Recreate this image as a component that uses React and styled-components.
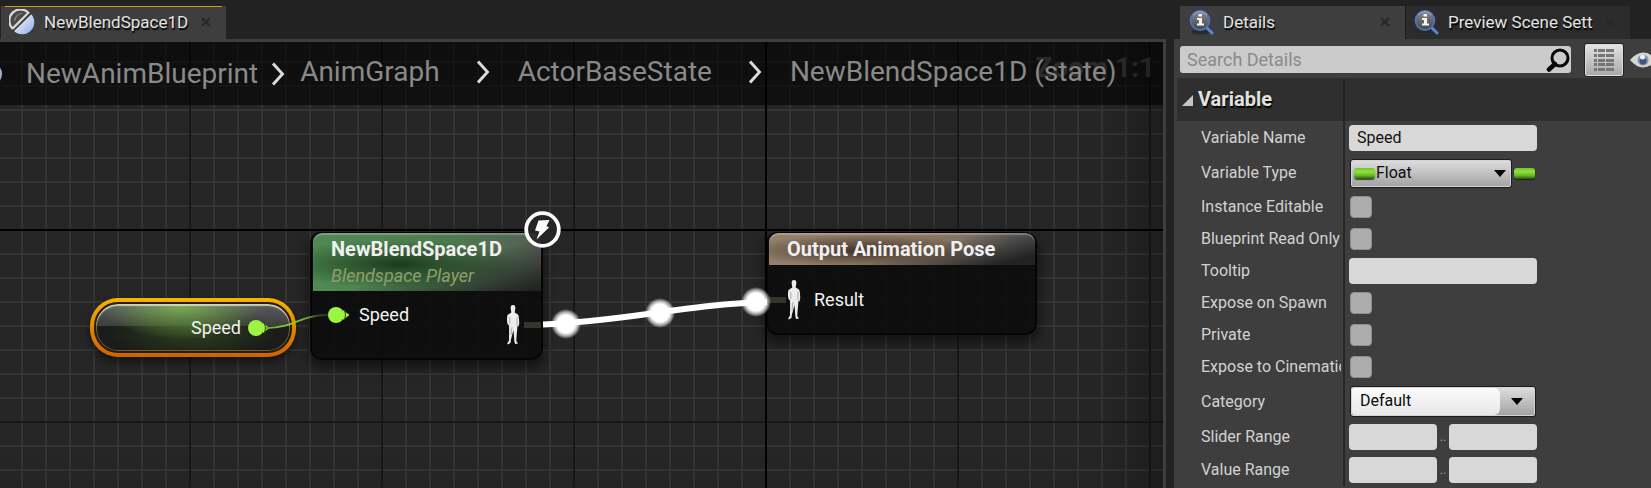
import React from "react";
import styled, { createGlobalStyle, css } from "styled-components";

const GlobalStyle = createGlobalStyle`
  *, *::before, *::after { box-sizing: border-box; }
  body { margin: 0; background: #222; color: #ddd; font-family: Roboto, sans-serif; }
  button, input, select { font: inherit; }
`;

/* ---------- frame ---------- */

const Editor = styled.main`
  display: grid;
  grid-template-columns: minmax(0, 1166fr) minmax(0, 477fr);
  column-gap: 8px;
  min-height: 100vh;
  padding-top: 6px;
  background: #222;
  overflow: hidden;
`;

const Dock = styled.section`
  display: flex;
  flex-direction: column;
  min-width: 0;
`;

const TabBar = styled.div`
  display: flex;
  height: 33px;
  padding-left: ${(p) => p.$inset}px;
`;

const Tab = styled.div`
  position: relative;
  display: flex;
  align-items: center;
  gap: 9px;
  width: 225px;
  padding: 0 15px 2px 8px;
  background: ${(p) => (p.$active ? "#3e3e3e" : "#2c2c2c")};
  box-shadow: ${(p) => (p.$active ? "none" : "inset 1px 0 0 #1a1a1a")};
  ${(p) =>
    p.$major &&
    css`
      &::before {
        content: "";
        position: absolute;
        inset: 0 4px auto;
        height: 1px;
        background: #c8a900;
      }
    `}
`;

const TabLabel = styled.button`
  flex: 1;
  min-width: 0;
  padding: 0;
  border: 0;
  background: none;
  color: #e2e2e2;
  font-size: 17px;
  line-height: 24px;
  text-align: left;
  white-space: nowrap;
  overflow: hidden;
  text-shadow: 1px 2px 1px #000;
`;

const TabClose = styled.button`
  display: flex;
  padding: 0;
  border: 0;
  background: none;
  color: #282828;
`;

/* ---------- graph ---------- */

const Graph = styled.div`
  position: relative;
  flex: 1;
  min-height: 446px;
  overflow: hidden;
  border: solid #3e3e3e;
  border-width: 3px 3px 0 0;
  background-color: #262626;
  background-image:
    linear-gradient(#000, #000),
    linear-gradient(#000, #000),
    linear-gradient(90deg, #181818 2px, transparent 2px),
    linear-gradient(#181818 2px, transparent 2px),
    linear-gradient(90deg, #343434 2px, transparent 2px),
    linear-gradient(#343434 2px, transparent 2px);
  background-size: 2px 100%, 100% 2px, 192px 192px, 192px 192px, 24px 24px, 24px 24px;
  background-position: 765px 0, 0 187px, 189px 0, 0 187px, 21px 0, 0 19px;
  background-repeat: no-repeat, no-repeat, repeat, repeat, repeat, repeat;
`;

const Vignette = styled.div`
  position: absolute;
  inset: 0;
  pointer-events: none;
  box-shadow: inset -50px 0 60px -30px rgba(0, 0, 0, 0.3);
`;

const ZoomLevel = styled.output`
  position: absolute;
  top: 8px;
  right: 8px;
  color: #6c6c6c;
  font-size: 28px;
  font-weight: 700;
  line-height: 36px;
`;

const Breadcrumbs = styled.nav`
  position: relative;
  display: flex;
  height: 63px;
  align-items: center;
  background: rgba(0, 0, 0, 0.6);
  color: #8a8a8a;
  font-size: 28px;
  line-height: 32px;
  white-space: nowrap;
`;

const RootCrumb = styled.div`
  display: flex;
  align-items: center;
  gap: 13px;
  margin-right: 15px;
`;

const CrumbTrail = styled.div`
  display: flex;
  align-items: center;
  gap: 28px;
  padding-bottom: 3px;
`;

const CrumbStep = styled.div`
  display: flex;
  align-items: center;
  gap: 36px;
`;

const Crumb = styled.a`
  color: inherit;
  text-decoration: none;
`;

const CrumbOrb = styled.span`
  width: 26px;
  height: 24px;
  margin-left: -24px;
  margin-right: 11px;
  border-radius: 50%;
  background: #9fb0d8;
`;

const Wires = styled.svg`
  position: absolute;
  left: 0;
  top: 0;
  pointer-events: none;
`;

const Node = styled.article`
  position: absolute;
  left: ${(p) => p.$x}px;
  top: ${(p) => p.$y}px;
  width: ${(p) => p.$w}px;
  padding: 1px 2px 3px 3px;
  border-radius: 12px;
  background: rgba(10, 10, 10, 0.86);
  box-shadow: inset 0 0 0 2px rgba(0, 0, 0, 0.6), 0 6px 12px 2px rgba(0, 0, 0, 0.5);
`;

const NodeHeader = styled.header`
  padding: 2px 18px;
  border-radius: 9px 9px 0 0;
  box-shadow: inset 0 2px 1px rgba(255, 255, 255, 0.25);
  ${(p) =>
    p.$tone === "green"
      ? css`
          background:
            radial-gradient(ellipse 55% 42% at 38% 54%, rgba(20, 48, 20, 0.85), transparent),
            linear-gradient(165deg, transparent 55%, rgba(30, 30, 30, 0.95) 98%),
            linear-gradient(90deg, #4f8a53 0%, #4d7a50 60%, #555f55 100%);
        `
      : css`
          background:
            radial-gradient(ellipse 45% 50% at 35% 55%, rgba(45, 35, 28, 0.8), transparent),
            linear-gradient(165deg, transparent 55%, rgba(30, 32, 32, 0.95) 90%),
            linear-gradient(90deg, #94806c 0%, #8a7663 60%, #666 100%);
        `}
`;

const NodeTitle = styled.h2`
  margin: 0;
  color: #f0f0f0;
  font-size: 20px;
  font-weight: 700;
  line-height: 28px;
  white-space: nowrap;
`;

const NodeSubtitle = styled.p`
  margin: 0;
  color: #8f9f6a;
  font-size: 18px;
  font-style: italic;
  line-height: 26px;
`;

const NodeBody = styled.div`
  display: flex;
  align-items: ${(p) => (p.$centered ? "center" : "flex-start")};
  justify-content: space-between;
  padding: ${(p) => p.$pad};
`;

const Pin = styled.div`
  display: flex;
  align-items: center;
  gap: ${(p) => p.$gap || 9}px;
  color: #f2f2f2;
  font-size: 18px;
  line-height: 20px;
`;

const PosePin = styled.div`
  display: flex;
  align-items: center;
  gap: ${(p) => (p.$output ? 4 : 1)}px;
`;

const PoseStub = styled.span`
  width: 17px;
  height: 6px;
  background: #35352f;
`;

const VariableNode = styled.article`
  position: absolute;
  left: 90px;
  top: 256px;
  width: 206px;
  height: 59px;
  padding: 4px;
  border-radius: 28px;
  background: linear-gradient(#f6b500, #e08a00 50%, #cf6200);
  box-shadow: 0 5px 10px rgba(0, 0, 0, 0.5);
`;

const VariableBody = styled.div`
  display: flex;
  align-items: center;
  justify-content: flex-end;
  gap: 7px;
  height: 100%;
  padding: 0 20px 0 0;
  border-radius: 24px;
  border: 2px solid #2b1c05;
  box-shadow: inset 0 2px 1px rgba(235, 235, 225, 0.75), inset 0 0 0 1px rgba(170, 130, 80, 0.6);
  background:
    radial-gradient(ellipse 42% 75% at 44% 0%, rgba(130, 190, 85, 0.85), transparent),
    radial-gradient(ellipse 45% 60% at 50% 60%, rgba(50, 72, 28, 0.8), transparent),
    linear-gradient(#5c5c60 0%, #3c3e3c 46%, #1b1b1b 47%, #191b19 100%);
  color: #f2f2f2;
  font-size: 18px;
  line-height: 22px;
`;

const Badge = styled.span`
  position: absolute;
  right: -18px;
  top: -21px;
  display: flex;
`;

/* ---------- details ---------- */

const DetailsPanel = styled.div`
  flex: 1;
  min-width: 0;
  background: #3e3e3e;
  overflow: hidden;
`;

const Toolbar = styled.div`
  display: flex;
  align-items: center;
  height: 39px;
  padding: 4px 0 2px 6px;
`;

const SearchBox = styled.label`
  display: flex;
  flex: 1;
  align-items: center;
  height: 27px;
  margin-right: 13px;
  padding-right: 1px;
  border-radius: 3px;
  background: #cbcbcb;
`;

const SearchInput = styled.input`
  flex: 1;
  min-width: 0;
  padding: 0 7px;
  border: 0;
  outline: 0;
  background: none;
  color: #222;
  font-size: 18px;
  &::placeholder { color: #8a8a8a; opacity: 1; }
`;

const ViewButton = styled.button`
  display: flex;
  align-items: center;
  justify-content: center;
  width: 40px;
  height: 34px;
  padding: 0;
  border: 1px solid #222;
  border-radius: 3px;
  background: linear-gradient(#e4e4e4, #a8a8a8);
  box-shadow: inset 0 0 0 1px #ddd;
`;

const EyeButton = styled.button`
  display: flex;
  width: 21px;
  margin-left: 6px;
  padding: 0;
  border: 0;
  background: none;
  overflow: hidden;
`;

const Properties = styled.form`
  display: flex;
  flex-direction: column;
  margin-left: 3px;
`;

const Row = styled.div`
  display: grid;
  grid-template-columns: 168px minmax(0, 1fr);
  height: ${(p) => p.$h}px;
  background: ${(p) => (p.$category ? "#2f2f2f" : "transparent")};
`;

const LabelCell = styled.div`
  display: flex;
  align-items: center;
  padding: 0 2px 0 24px;
  border-right: 2px solid #262626;
`;

const Label = styled.label`
  color: #d2d2d2;
  font-size: 16px;
  line-height: 22px;
  white-space: nowrap;
  overflow: hidden;
`;

const CategoryToggle = styled.button`
  display: flex;
  align-items: center;
  gap: 5px;
  padding: 0 0 2px 4px;
  border: 0;
  border-right: 2px solid #262626;
  background: none;
  color: #e2e2e2;
  font-size: 20px;
  font-weight: 700;
  line-height: 26px;
  text-shadow: 1px 2px 1px #000;
`;

const ValueCell = styled.div`
  display: flex;
  align-items: center;
  gap: 2px;
  padding-left: ${(p) => (p.$framed ? 5 : 4)}px;
`;

const TextField = styled.input`
  width: ${(p) => (p.$half ? 88 : 188)}px;
  height: 26px;
  padding: 0 8px 2px;
  border: 0;
  border-radius: 4px;
  outline: 0;
  background: #d8d8d8;
  color: #111;
  font-size: 16px;
`;

const RangeDots = styled.span`
  width: 8px;
  color: #a0a0a0;
  font-size: 12px;
  line-height: 16px;
  text-align: center;
`;

const CheckBox = styled.input.attrs({ type: "checkbox" })`
  appearance: none;
  width: 22px;
  height: 22px;
  margin: 0;
  border: 1px solid #8e8e8e;
  border-radius: 4px;
  background: #adadad;
  &:checked { background: #e0a030; }
`;

const ComboFrame = styled.div`
  position: relative;
  display: grid;
  align-items: center;
  width: ${(p) => p.$w}px;
  height: ${(p) => p.$h}px;
  padding: 1px;
  border: 1px solid #1c1c1c;
  border-radius: 3px;
  background: linear-gradient(#dedede, #a2a2a2);
  box-shadow: inset 0 0 0 1px #d4d4d4;
  > * { grid-area: 1 / 1; }
`;

const ComboFace = styled.span`
  height: 100%;
  margin-right: 34px;
  border-radius: 3px 6px 6px 3px;
  background: linear-gradient(#fbfbfb, #e8e8e8);
`;

const Combo = styled.select`
  appearance: none;
  position: relative;
  width: 100%;
  height: 24px;
  padding: 0 0 2px ${(p) => p.$indent}px;
  border: 0;
  outline: 0;
  background: none;
  color: #0c0c0c;
  font-size: 16px;
`;

const ComboArrow = styled.span`
  justify-self: end;
  margin-right: ${(p) => p.$right}px;
  border: solid transparent;
  border-width: 7px 6px 0;
  border-top-color: #050505;
  pointer-events: none;
`;

const Pill = styled.span`
  display: block;
  justify-self: start;
  width: 21px;
  height: 11px;
  margin-left: ${(p) => (p.$inset ? 2 : 0)}px;
  border-radius: 3px;
  background: linear-gradient(#6fc821, #8fe23c 35%, #64b51c 70%, #2f4f18);
  box-shadow: 0 1px 1px rgba(20, 20, 20, 0.7);
`;

/* ---------- drawings ---------- */

const CloseIcon = () => (
  <svg width="10" height="10" viewBox="0 0 10 10" fill="none" stroke="currentColor" strokeWidth="2.4">
    <path d="M1 1L9 9M9 1L1 9" />
  </svg>
);

const BlendIcon = () => (
  <svg width="26" height="26" viewBox="0 0 26 26">
    <defs>
      <linearGradient id="orb" x1="0" y1="0" x2="1" y2="1">
        <stop offset="0.4" stopColor="#d5def6" />
        <stop offset="1" stopColor="#8fa6ea" />
      </linearGradient>
    </defs>
    <path d="M5 19.500L21.500 4.500A12 12 0 0 1 5 22Z" fill="url(#orb)" />
    <path d="M3.500 19.500A11 11 0 0 1 19.500 3.800Z" fill="#4a4a4a" stroke="#d8d8d8" strokeWidth="2.200" strokeLinejoin="round" />
    <path d="M3.500 22.500L22.500 4" stroke="#333" strokeWidth="1.600" />
    <path d="M5.500 12A8 8 0 0 1 13 4.500" fill="none" stroke="#8a8a8a" strokeWidth="1.200" />
  </svg>
);

const InfoIcon = () => (
  <svg width="26" height="26" viewBox="0 0 26 26">
    <defs>
      <linearGradient id="lens" x1="0" y1="0" x2="0" y2="1">
        <stop offset="0" stopColor="#8a8a8a" />
        <stop offset="1" stopColor="#454545" />
      </linearGradient>
    </defs>
    <ellipse cx="13" cy="23" rx="10" ry="2.500" fill="#2a2a2a" />
    <path d="M18 18L24 24" stroke="#5b83d6" strokeWidth="3" strokeLinecap="round" />
    <circle cx="12" cy="11.500" r="9.500" fill="url(#lens)" stroke="#4e72bd" strokeWidth="1.800" />
    <path d="M5 6A9 9 0 0 1 19 6" fill="none" stroke="#9db4e4" strokeWidth="1" />
    <path d="M10.500 5h3.500v2.500h-3.500zM9 9h5v5.500h2v2h-7v-2h2v-3.500h-2z" fill="#f4f4f4" />
  </svg>
);

const SearchIcon = () => (
  <svg width="24" height="24" viewBox="0 0 24 24" fill="none" stroke="#080808">
    <circle cx="14" cy="10" r="8" strokeWidth="3" />
    <path d="M9 16L3 21.500" strokeWidth="4.500" strokeLinecap="round" />
  </svg>
);

const ListIcon = () => (
  <svg width="22" height="22" viewBox="0 0 22 22" fill="#757575">
    {[0, 5, 10, 14, 19].map((y) => (
      <g key={y}>
        <rect x="1" y={y} width="3" height="3" />
        <rect x="5" y={y} width="7" height="3" />
        <rect x="13" y={y} width="8" height="3" />
      </g>
    ))}
  </svg>
);

const EyeShape = styled.svg`
  flex: none;
`;

const EyeIcon = () => (
  <EyeShape width="28" height="16" viewBox="0 0 28 16">
    <path d="M0 8Q13 -7 27 8Q13 23 0 8Z" fill="#d6d6d6" />
    <circle cx="13" cy="8" r="5.500" fill="#8494ae" />
    <circle cx="13" cy="9" r="3.500" fill="#3c5684" />
    <circle cx="12.500" cy="5" r="2.500" fill="#f2f2f2" />
  </EyeShape>
);

const Chevron = () => (
  <svg width="14" height="24" viewBox="0 0 14 24" fill="none" stroke="#dcdcdc" strokeWidth="2.900">
    <path d="M2 1.500L11.500 12L2 22.500" />
  </svg>
);

const ExpandedIcon = () => (
  <svg width="12" height="14" viewBox="0 0 12 14">
    <path d="M12 3V14H1Z" fill="#c4c4c4" />
  </svg>
);

const FloatPin = () => (
  <svg width="22" height="16" viewBox="0 0 22 16" fill="#9cf541">
    <circle cx="8" cy="8" r="8" />
    <path d="M15 3L21.500 8L15 13Z" />
    <path d="M16.500 2.500Q18.500 8 16.500 13.500" fill="none" stroke="#24401a" />
  </svg>
);

const PoseIcon = () => (
  <svg width="14" height="40" viewBox="0 0 14 40">
    <path
      d="M7 0C9 0 9.500 1.500 9.300 3.500C9.200 5 8.700 6 8.700 7.500L12 9.500C13 11 13 14 13.200 17C13.300 19 13 20.500 12 22L11.500 20C11 27 10.500 31 10.300 36L12 38.500L9 39L8.300 36L7.500 25L4.800 35L4.500 38L1.500 39.500L1.200 38.500L3 35.500C3 30 3.300 26 3 20.500L1.500 19C.8 16 .8 12.500 1.500 10L5.300 7.500C5.300 6 4.800 5 4.700 3.500C4.500 1.500 5 0 7 0Z"
      fill="#ededed"
    />
    <path d="M3.800 12V19M11 12V20M6 22L5 30" stroke="#a2a2a2" strokeWidth="0.900" />
  </svg>
);

const BoltBadge = () => (
  <svg width="37" height="37" viewBox="0 0 37 37">
    <circle cx="18.500" cy="18.500" r="16.300" fill="#262626" fillOpacity="0.900" stroke="#fafafa" strokeWidth="3.800" />
    <path d="M14.500 9.500L25.500 9L22.500 15L25 16.500L12.500 28.500L15.500 20.500L11 19.500Z" fill="#fff" />
  </svg>
);

const WireLayer = () => (
  <Wires width="1160" height="446">
    <defs>
      <radialGradient id="glow">
        <stop offset="0.600" stopColor="#fff" />
        <stop offset="0.800" stopColor="#fff" stopOpacity="0.600" />
        <stop offset="1" stopColor="#fff" stopOpacity="0" />
      </radialGradient>
      <linearGradient id="floatWire" gradientUnits="userSpaceOnUse" x1="266" y1="0" x2="330" y2="0">
        <stop offset="0" stopColor="#6fa53c" />
        <stop offset="0.400" stopColor="#86dc38" />
        <stop offset="0.660" stopColor="#63a030" />
        <stop offset="0.800" stopColor="#33472a" />
        <stop offset="1" stopColor="#26331f" />
      </linearGradient>
    </defs>
    <path d="M266 286C296 286 298 273 328 273" fill="none" stroke="url(#floatWire)" strokeWidth="1.800" />
    <path d="M543 282.500C620 280 690 262 767 260" fill="none" stroke="#fff" strokeWidth="6" />
    {[[566, 282], [660, 271], [756, 260]].map(([x, y]) => (
      <circle key={x} cx={x} cy={y} r="15" fill="url(#glow)" />
    ))}
  </Wires>
);

/* ---------- page ---------- */

const toggles = (items) =>
  items.map(([id, text]) => (
    <Row key={id} $h={32}>
      <LabelCell><Label htmlFor={id}>{text}</Label></LabelCell>
      <ValueCell $framed><CheckBox id={id} /></ValueCell>
    </Row>
  ));

const RangeRow = ({ id, text }) => (
  <Row $h={33}>
    <LabelCell><Label htmlFor={id}>{text}</Label></LabelCell>
    <ValueCell>
      <TextField id={id} $half />
      <RangeDots>..</RangeDots>
      <TextField $half aria-label={`${text} maximum`} />
    </ValueCell>
  </Row>
);

export default function App() {
  return (
    <>
      <GlobalStyle />
      <Editor>
        <Dock>
          <TabBar $inset={1}>
            <Tab $active $major>
              <BlendIcon />
              <TabLabel>NewBlendSpace1D</TabLabel>
              <TabClose aria-label="Close tab"><CloseIcon /></TabClose>
            </Tab>
          </TabBar>
          <Graph>
            <ZoomLevel>Zoom 1:1</ZoomLevel>
            <Breadcrumbs>
              <RootCrumb>
                <CrumbOrb />
                <Crumb href="#blueprint">NewAnimBlueprint</Crumb>
                <Chevron />
              </RootCrumb>
              <CrumbTrail>
                <CrumbStep><Crumb href="#graph">AnimGraph</Crumb><Chevron /></CrumbStep>
                <CrumbStep><Crumb href="#base">ActorBaseState</Crumb><Chevron /></CrumbStep>
                <Crumb href="#state">NewBlendSpace1D (state)</Crumb>
              </CrumbTrail>
            </Breadcrumbs>
            <Vignette />

            <VariableNode>
              <VariableBody>Speed<FloatPin /></VariableBody>
            </VariableNode>

            <Node $x={310} $y={190} $w={233}>
              <NodeHeader $tone="green">
                <NodeTitle>NewBlendSpace1D</NodeTitle>
                <NodeSubtitle>Blendspace Player</NodeSubtitle>
              </NodeHeader>
              <NodeBody $pad="14px 0 12px 15px">
                <Pin><FloatPin />Speed</Pin>
                <PosePin $output><PoseIcon /><PoseStub /></PosePin>
              </NodeBody>
              <Badge><BoltBadge /></Badge>
            </Node>

            <Node $x={766} $y={190} $w={271}>
              <NodeHeader $tone="brown">
                <NodeTitle>Output Animation Pose</NodeTitle>
              </NodeHeader>
              <NodeBody $centered $pad="15px 0 12px 0">
                <Pin $gap={13}>
                  <PosePin><PoseStub /><PoseIcon /></PosePin>
                  Result
                </Pin>
              </NodeBody>
            </Node>
            <WireLayer />
          </Graph>
        </Dock>

        <Dock>
          <TabBar $inset={6}>
            <Tab $active>
              <InfoIcon />
              <TabLabel>Details</TabLabel>
              <TabClose aria-label="Close Details"><CloseIcon /></TabClose>
            </Tab>
            <Tab>
              <InfoIcon />
              <TabLabel>Preview Scene Sett</TabLabel>
              <TabClose aria-label="Close Preview Scene Settings"><CloseIcon /></TabClose>
            </Tab>
          </TabBar>
          <DetailsPanel>
            <Toolbar>
              <SearchBox>
                <SearchInput aria-label="Search Details" placeholder="Search Details" />
                <SearchIcon />
              </SearchBox>
              <ViewButton aria-label="Property matrix"><ListIcon /></ViewButton>
              <EyeButton aria-label="View options"><EyeIcon /></EyeButton>
            </Toolbar>
            <Properties>
              <Row $h={43} $category>
                <CategoryToggle type="button"><ExpandedIcon />Variable</CategoryToggle>
              </Row>
              <Row $h={34}>
                <LabelCell><Label htmlFor="name">Variable Name</Label></LabelCell>
                <ValueCell><TextField id="name" defaultValue="Speed" /></ValueCell>
              </Row>
              <Row $h={36}>
                <LabelCell><Label htmlFor="type">Variable Type</Label></LabelCell>
                <ValueCell $framed>
                  <ComboFrame $w={162} $h={29}>
                    <Pill $inset />
                    <Combo id="type" $indent={24}><option>Float</option></Combo>
                    <ComboArrow $right={4} />
                  </ComboFrame>
                  <Pill />
                </ValueCell>
              </Row>
              {toggles([["editable", "Instance Editable"], ["readonly", "Blueprint Read Only"]])}
              <Row $h={32}>
                <LabelCell><Label htmlFor="tooltip">Tooltip</Label></LabelCell>
                <ValueCell><TextField id="tooltip" /></ValueCell>
              </Row>
              {toggles([["spawn", "Expose on Spawn"], ["private", "Private"], ["cinematics", "Expose to Cinematics"]])}
              <Row $h={37}>
                <LabelCell><Label htmlFor="category">Category</Label></LabelCell>
                <ValueCell $framed>
                  <ComboFrame $w={186} $h={31}>
                    <ComboFace />
                    <Combo id="category" $indent={8}><option>Default</option></Combo>
                    <ComboArrow $right={11} />
                  </ComboFrame>
                </ValueCell>
              </Row>
              <RangeRow id="slider" text="Slider Range" />
              <RangeRow id="value" text="Value Range" />
            </Properties>
          </DetailsPanel>
        </Dock>
      </Editor>
    </>
  );
}
